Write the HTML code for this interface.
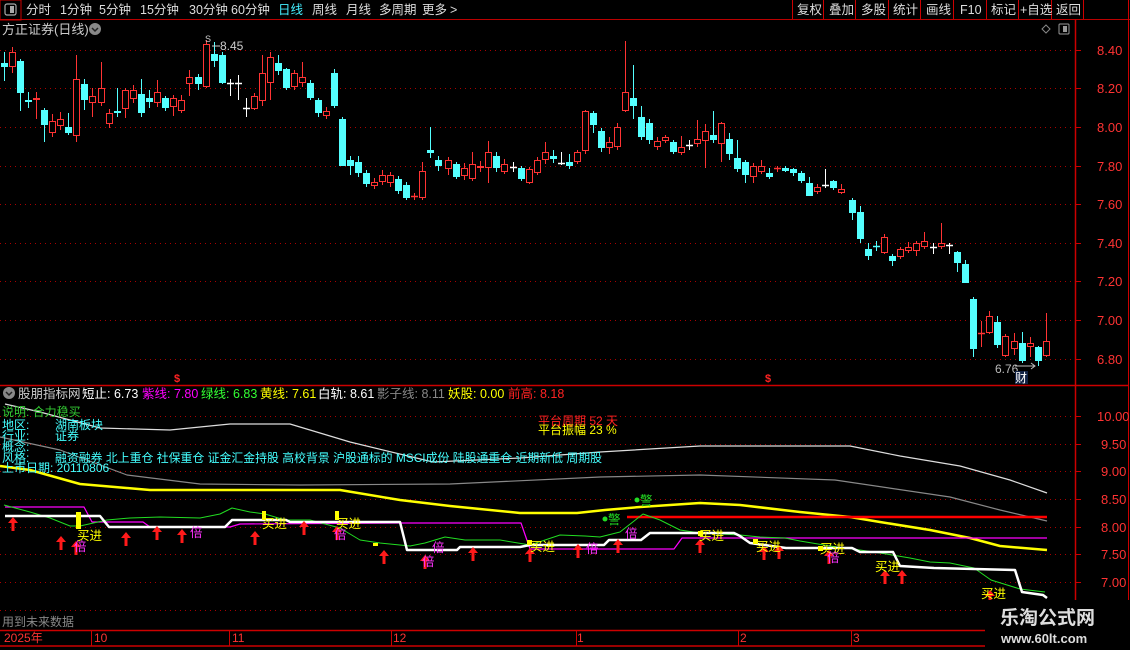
<!DOCTYPE html>
<html><head><meta charset="utf-8"><style>
html,body{margin:0;padding:0;background:#000;width:1130px;height:650px;overflow:hidden}
svg{display:block}
text{font-family:"Liberation Sans","Noto Sans CJK SC",sans-serif}
</style></head><body>
<svg id="s" width="1130" height="650" xmlns="http://www.w3.org/2000/svg">
<rect x="0" y="0" width="1130" height="19" fill="#000"/>
<line x1="0" y1="19.5" x2="1130" y2="19.5" stroke="#b00" stroke-width="1"/>
<rect x="0" y="0" width="21" height="20" fill="none" stroke="#c00" stroke-width="1"/>
<rect x="5" y="4" width="11" height="11" rx="2" fill="none" stroke="#aaa" stroke-width="1.2"/>
<rect x="10" y="6" width="4" height="7" fill="#aaa"/>
<g font-size="12.5" fill="#ddd">
<text x="26" y="14">分时</text><text x="60" y="14">1分钟</text><text x="99" y="14">5分钟</text><text x="140" y="14">15分钟</text><text x="189" y="14">30分钟</text><text x="231" y="14">60分钟</text>
<text x="278" y="14" fill="#4ef">日线</text><text x="312" y="14">周线</text><text x="346" y="14">月线</text><text x="379" y="14">多周期</text><text x="422" y="14">更多</text><text x="450" y="14">&gt;</text>
</g>
<g stroke="#c00" stroke-width="1"><line x1="792.5" y1="0" x2="792.5" y2="19"/><line x1="823.5" y1="0" x2="823.5" y2="19"/><line x1="855.5" y1="0" x2="855.5" y2="19"/><line x1="888.5" y1="0" x2="888.5" y2="19"/><line x1="920.5" y1="0" x2="920.5" y2="19"/><line x1="953.5" y1="0" x2="953.5" y2="19"/><line x1="986.5" y1="0" x2="986.5" y2="19"/><line x1="1018.5" y1="0" x2="1018.5" y2="19"/><line x1="1051.5" y1="0" x2="1051.5" y2="19"/><line x1="1083.5" y1="0" x2="1083.5" y2="19"/><line x1="1128.5" y1="0" x2="1128.5" y2="650"/></g>
<g font-size="12.5" fill="#ddd"><text x="797" y="14">复权</text><text x="829" y="14">叠加</text><text x="861" y="14">多股</text><text x="893" y="14">统计</text><text x="926" y="14">画线</text><text x="960" y="14">F10</text><text x="991" y="14">标记</text><text x="1020" y="14">+自选</text><text x="1056" y="14">返回</text></g>
<text x="2" y="34" font-size="13" fill="#ccc">方正证券(日线)</text>
<circle cx="95" cy="29" r="6" fill="#888"/><path d="M92 28 L95 31 L98 28" stroke="#222" stroke-width="1.5" fill="none"/>
<path d="M1046 25 L1050 29 L1046 33 L1042 29 Z" stroke="#888" fill="none"/>
<rect x="1059" y="24" width="10" height="10" rx="1" fill="none" stroke="#999"/><rect x="1063" y="26" width="4" height="6" fill="#999"/>
<line x1="1075.5" y1="19" x2="1075.5" y2="630" stroke="#c00" stroke-width="1.5"/>
<line x1="0" y1="385.5" x2="1128" y2="385.5" stroke="#c00" stroke-width="1.5"/>
<line x1="0" y1="630.5" x2="1075" y2="630.5" stroke="#c00" stroke-width="1.5"/>
<line x1="0" y1="646" x2="1075" y2="646" stroke="#c00" stroke-width="1.5"/>
<g id="grid"></g>
<g id="lines"></g>
<g id="candles"></g>
<g id="marks"></g>
<text x="205" y="42" font-size="9" fill="#ccc">S</text><line x1="212" y1="46" x2="220" y2="46" stroke="#ccc"/><text x="220" y="50" font-size="12" fill="#ccc">8.45</text>
<text x="174" y="382" font-size="11" fill="#f22" font-weight="bold">$</text>
<text x="765" y="382" font-size="11" fill="#f22" font-weight="bold">$</text>
<text x="995" y="373" font-size="12" fill="#bbb">6.76</text><path d="M1015 366 L1035 366 M1031 363 L1035 366 L1031 369" stroke="#bbb" fill="none"/>
<rect x="1015" y="371" width="13" height="13" fill="#124"/><text x="1015" y="382" font-size="12" fill="#fff">财</text>
<circle cx="9" cy="393" r="6" fill="#888"/><path d="M6 392 L9 395 L12 392" stroke="#222" stroke-width="1.5" fill="none"/>
<g font-size="12.5">
<text x="18" y="398" fill="#ccc">股朋指标网</text>
<text x="82" y="398" fill="#fff">短止: 6.73</text>
<text x="142" y="398" fill="#f0f">紫线: 7.80</text>
<text x="201" y="398" fill="#3f3">绿线: 6.83</text>
<text x="260" y="398" fill="#ff0">黄线: 7.61</text>
<text x="318" y="398" fill="#fff">白轨: 8.61</text>
<text x="377" y="398" fill="#888">影子线: 8.11</text>
<text x="448" y="398" fill="#ff0">妖股: 0.00</text>
<text x="508" y="398" fill="#f22">前高: 8.18</text>
</g>
<g font-size="12">
<text x="2" y="416" fill="#3c3">说明: 合力稳买</text>
<text x="2" y="429" fill="#4ff">地区:</text><text x="55" y="429" fill="#4ff">湖南板块</text>
<text x="2" y="440" fill="#4ff">行业:</text><text x="55" y="440" fill="#4ff">证券</text>
<text x="2" y="451" fill="#4ff">概念:</text>
<text x="2" y="462" fill="#4ff">风格:</text><text x="55" y="462" fill="#4ff" textLength="547" lengthAdjust="spacingAndGlyphs">融资融券 北上重仓 社保重仓 证金汇金持股 高校背景 沪股通标的 MSCI成份 陆股通重仓 近期新低 周期股</text>
<text x="2" y="472" fill="#4ff">上市日期: 20110806</text>
<text x="538" y="425" fill="#f22">平台周期 52 天</text>
<text x="538" y="434" fill="#ff0">平台振幅 23 %</text>
</g>
<text x="2" y="626" font-size="12" fill="#888">用到未来数据</text>
<g font-size="12" fill="#f33">
<text x="4" y="642">2025年</text><text x="94" y="642">10</text><text x="232" y="642">11</text><text x="393" y="642">12</text><text x="577" y="642">1</text><text x="740" y="642">2</text><text x="853" y="642">3</text>
</g>
<g stroke="#c00"><line x1="91.5" y1="630" x2="91.5" y2="646"/><line x1="229.5" y1="630" x2="229.5" y2="646"/><line x1="391.5" y1="630" x2="391.5" y2="646"/><line x1="576.5" y1="630" x2="576.5" y2="646"/><line x1="738.5" y1="630" x2="738.5" y2="646"/><line x1="851.5" y1="630" x2="851.5" y2="646"/></g>
<g id="axis" font-size="13" fill="#f33"></g>
<rect x="985" y="600" width="145" height="50" fill="#000"/>
<text x="1000" y="624" font-size="19" font-weight="bold" fill="#ddd" font-family="'Noto Sans CJK SC',sans-serif">乐淘公式网</text>
<text x="1001" y="643" font-size="13" font-weight="bold" fill="#ddd" font-family="'Liberation Serif',serif">www.60lt.com</text>
</svg>
<script>
var NS="http://www.w3.org/2000/svg";
function el(p,t,a,txt){var e=document.createElementNS(NS,t);for(var k in a)e.setAttribute(k,a[k]);if(txt)e.textContent=txt;document.getElementById(p).appendChild(e);return e;}
[50,88,127,166,204,243,281,320,359].forEach(function(y){el('grid','line',{x1:0,x2:1074,y1:y+.5,y2:y+.5,stroke:'#a00','stroke-dasharray':'1 4'});});
[416,444,471,499,527,554,582,610].forEach(function(y){el('grid','line',{x1:0,x2:1074,y1:y+.5,y2:y+.5,stroke:'#a00','stroke-dasharray':'1 4'});});
var ml=[['8.40',50],['8.20',88],['8.00',127],['7.80',166],['7.60',204],['7.40',243],['7.20',281],['7.00',320],['6.80',359]];
ml.forEach(function(a){el('axis','text',{x:1097,y:a[1]+5},a[0]);el('axis','line',{x1:1075,x2:1081,y1:a[1]+.5,y2:a[1]+.5,stroke:'#c00'});});
var ll=[['10.00',416],['9.50',444],['9.00',471],['8.50',499],['8.00',527],['7.50',554],['7.00',582]];
ll.forEach(function(a){el('axis','text',{x:a[0].length>4?1097:1101,y:a[1]+5},a[0]);el('axis','line',{x1:1075,x2:1081,y1:a[1]+.5,y2:a[1]+.5,stroke:'#c00'});});
var C="4,63,67,c,52,81;12,52,67,r,47,73;20,61,93,c,59,111;28,100,102,c,92,108;36,98,100,r,92,119;44,110,125,c,108,142;52,121,133,r,114,137;60,119,126,r,112,130;68,127,133,c,113,135;76,79,136,r,55,142;84,84,100,c,79,110;92,96,103,r,88,117;101,88,103,r,62,106;109,113,124,r,109,128;117,111,113,c,88,117;125,90,109,r,88,118;133,90,99,r,85,103;141,94,113,c,79,117;149,98,102,c,90,108;157,92,103,r,80,107;165,98,108,c,96,111;173,98,107,r,95,116;181,100,111,r,95,113;189,77,84,r,70,96;198,77,84,c,74,90;206,44,87,r,40,88;214,54,61,c,42,67;222,55,83,c,52,84;230,83,84,w,79,96;238,83,84,w,75,100;246,108,109,w,98,117;254,96,109,r,93,110;262,73,101,r,55,106;270,57,83,r,52,100;278,63,71,c,55,75;286,69,88,c,68,90;294,73,87,r,70,90;302,77,83,r,62,87;310,83,98,c,80,100;318,100,113,c,98,117;326,111,116,r,107,119;334,73,106,c,69,108;342,119,166,c,117,166;350,160,166,c,156,175;358,162,173,c,156,177;366,173,184,c,170,187;374,182,186,r,178,189;382,175,182,r,170,185;390,175,183,r,172,187;398,179,191,c,176,194;406,185,198,c,182,200;414,196,197,r,193,200;422,171,198,r,162,200;430,150,153,c,127,158;438,160,166,c,156,171;448,160,169,r,157,175;456,164,177,c,162,179;464,168,176,r,163,180;472,164,179,r,152,181;480,166,168,r,161,172;488,152,168,r,141,183;496,156,168,c,152,172;504,164,172,r,159,174;513,167,168,w,162,172;521,168,179,c,166,181;529,169,183,r,167,184;537,160,173,r,157,175;545,152,160,r,142,164;553,156,159,c,150,163;561,163,164,w,152,165;569,162,166,c,154,169;577,152,162,r,150,164;585,111,151,r,110,154;593,113,125,c,111,133;601,131,148,c,128,152;609,142,148,r,137,154;617,127,147,r,123,150;625,92,111,r,41,112;633,98,106,c,65,119;641,117,137,c,106,140;649,123,140,c,119,144;657,141,147,r,137,150;665,137,141,r,135,143;673,142,152,c,140,154;681,147,153,r,136,155;689,145,146,w,140,150;697,139,144,r,120,147;705,131,141,r,124,168;713,135,140,c,111,143;721,123,144,r,122,162;729,139,154,c,133,160;737,158,169,c,140,172;745,162,175,c,160,183;753,166,177,r,163,183;761,166,172,r,160,174;769,173,177,c,168,179;777,168,169,r,166,172;785,168,171,c,166,172;793,169,173,c,168,176;801,173,181,c,171,183;809,183,196,c,177,196;817,187,192,r,184,194;825,185,186,w,169,188;833,181,188,c,180,190;841,189,193,r,184,194;852,200,213,c,198,220;860,212,239,c,206,243;868,249,256,c,243,260;876,246,247,c,241,251;884,237,253,r,234,254;892,256,261,c,254,266;900,249,257,r,247,259;908,247,251,r,242,253;916,243,251,r,241,256;924,241,247,r,232,249;933,247,248,w,243,254;941,243,247,r,223,249;949,245,246,w,243,254;957,252,263,c,251,272;965,264,283,c,260,283;973,299,349,c,297,357;981,333,334,r,321,347;989,316,333,r,311,334;997,322,345,c,316,348;1005,336,356,r,334,357;1014,341,349,r,333,355;1022,343,361,c,332,363;1030,343,347,r,337,357;1038,347,361,c,346,366;1046,341,356,r,313,357";
C.split(';').forEach(function(s){var a=s.split(',');var x=+a[0],t=+a[1],b=+a[2],c=a[3],wt=+a[4],wb=+a[5];
var col=c=='r'?'#ff3333':c=='c'?'#54ffff':'#ffffff';
el('candles','line',{x1:x+.5,x2:x+.5,y1:wt,y2:wb,stroke:col});
if(c=='w'||b-t<2){el('candles','line',{x1:x-3,x2:x+4,y1:t+.5,y2:t+.5,stroke:col,'stroke-width':1.5});}
else if(c=='r'){el('candles','rect',{x:x-2.5,y:t+.5,width:6,height:b-t-1,fill:'#000',stroke:col});}
else{el('candles','rect',{x:x-3,y:t,width:7,height:b-t,fill:col});}
});
function pl(pts,col,w){el('lines','polyline',{points:pts,fill:'none',stroke:col,'stroke-width':w,'stroke-linejoin':'round'});}
pl("5,404 40,412 100,428 170,430 230,424 290,424 350,442 433,462 520,458 600,452 700,446 850,446 900,456 960,466 1010,480 1047,493","#ddd",1.2);
pl("0,437 60,450 127,475 200,484 300,485 450,484 600,477 700,475 835,480 950,497 1000,510 1047,521","#888",1.2);
pl("0,466 30,470 80,484 150,490 210,490 340,490 400,500 450,506 520,513 577,513 605,510 640,507 700,503 740,505 800,512 850,517 880,522 930,530 970,538 1000,546 1047,550","#ffff00",2.5);
pl("627,517 1047,517","#ff0000",2.5);
pl("5,507 84,507 92,522 143,522 150,527 230,527 240,524 400,523 521,523 530,549 674,549 682,538 1047,538","#ff00ff",1.2);
pl("4,505 30,512 50,518 70,526 80,526 107,520 130,518 160,517 200,518 220,514 232,508 250,512 265,514 285,520 310,520 340,528 360,540 380,543 410,546 425,543 445,537 465,540 500,540 530,545 560,535 585,536 600,537 620,532 643,514 660,520 680,530 700,533 740,535 760,537 785,538 800,541 830,546 860,550 880,553 910,558 930,562 950,563 974,568 991,580 1020,589 1045,592","#22dd22",1);
pl("5,516 100,516 109,527 225,527 232,520 286,520 290,522 400,522 407,550 457,550 460,547 520,547 530,545 604,545 609,540 641,540 650,533 734,533 740,536 750,543 786,548 852,548 860,552 893,552 900,566 934,568 1015,570 1022,592 1043,595 1047,598","#ffffff",2.5);
function arrow(x,y){el('marks','path',{d:'M'+x+' '+y+' l-5 6 h3.5 v8 h3 v-8 h3.5z',fill:'#ff1a1a'});}
[[13,517],[61,536],[76,541],[126,532],[157,526],[182,529],[255,531],[304,521],[337,526],[384,550],[425,555],[473,547],[530,548],[578,544],[618,539],[700,539],[764,546],[779,545],[829,550],[885,570],[902,570],[990,590]].forEach(function(a){arrow(a[0],a[1]);});
[[76,512,5,17],[262,511,4,9],[335,511,4,9],[373,543,5,3],[527,540,5,5],[698,531,5,5],[753,539,5,5],[818,546,5,5]].forEach(function(a){el('marks','rect',{x:a[0],y:a[1],width:a[2],height:a[3],fill:'#ff0'});});
[[77,540],[262,528],[336,528],[530,551],[699,540],[756,551],[820,553],[875,571],[981,598]].forEach(function(a){el('marks','text',{x:a[0],y:a[1],'font-size':12.5,fill:'#ff0'},'买进');});
[[74,551],[190,537],[334,539],[432,552],[422,566],[586,553],[625,538],[827,562]].forEach(function(a){el('marks','text',{x:a[0],y:a[1],'font-size':12.5,fill:'#ff33ff'},'倍');});
el('marks','circle',{cx:637,cy:500,r:2.5,fill:'#2d2'});el('marks','text',{x:640,y:505,'font-size':12.5,fill:'#2d2'},'警');
el('marks','circle',{cx:605,cy:519,r:2.5,fill:'#2d2'});el('marks','text',{x:608,y:524,'font-size':12.5,fill:'#2d2'},'警');
</script>
</body></html>
